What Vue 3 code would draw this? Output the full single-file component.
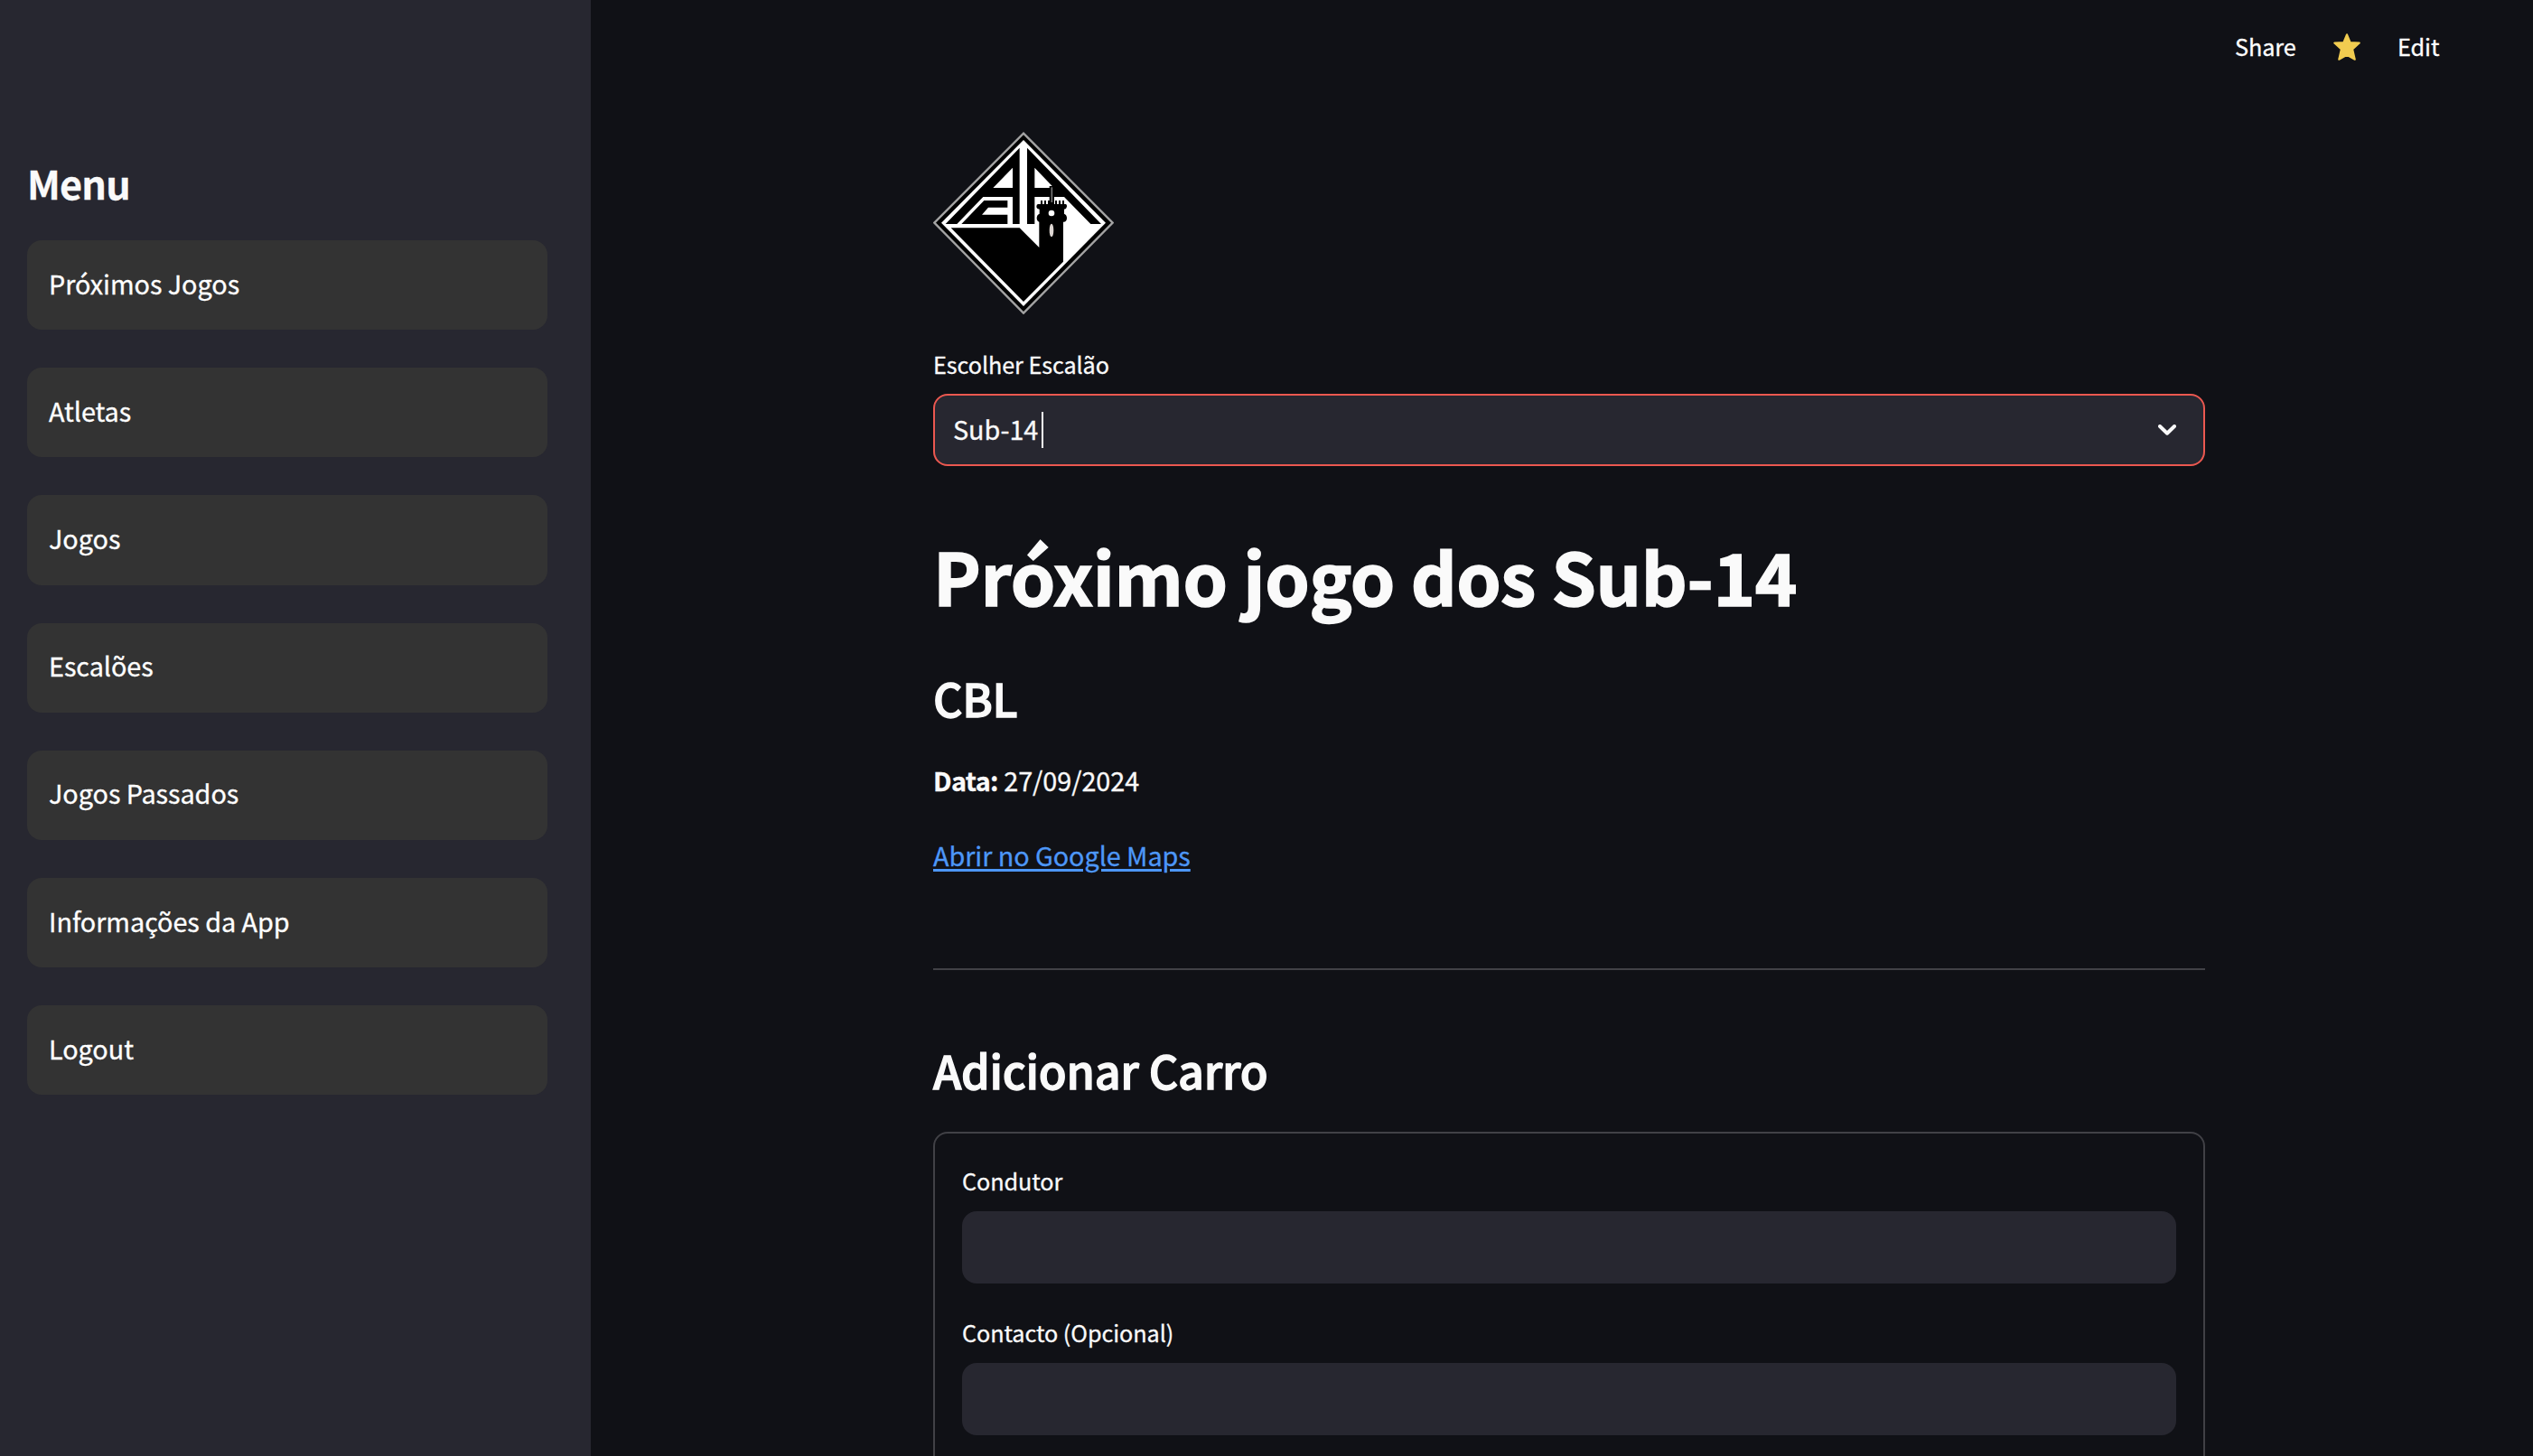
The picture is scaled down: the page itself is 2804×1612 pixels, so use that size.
<script setup>
const menu = ['Próximos Jogos', 'Atletas', 'Jogos', 'Escalões', 'Jogos Passados', 'Informações da App', 'Logout']
const fields = ['Condutor', 'Contacto (Opcional)']
</script>

<template>
  <div class="app">
    <aside class="sidebar">
      <h2 class="menu-title">Menu</h2>
      <nav class="menu">
        <a v-for="item in menu" :key="item" class="menu-item">{{ item }}</a>
      </nav>
    </aside>

    <div class="page">
      <header class="toolbar">
        <span class="share">Share</span>
        <svg class="star" viewBox="0 0 30 30">
          <path d="M15 1.2 18.6 10 28.8 10.6 21.2 17.4 23.8 28.8 15 23.8 6.2 28.8 8.8 17.4 1.2 10.6 11.4 10Z" />
        </svg>
        <span>Edit</span>
      </header>

      <main class="content">
        <svg class="logo" viewBox="39 48 600 606">
          <path d="M339 53 635 350 339 650 43 350Z" fill="#000" stroke="#a3a3a3" stroke-width="7" />
          <path d="M339 75 612 350 339 627 66 350Z" fill="#fff" />
          <path
            d="M326 101V354H303V264H205L118 354H80ZM303 167 238 234H303Z"
            fill="#000" fill-rule="evenodd"
          />
          <path d="M208 276H286V299H222L201 323H286V354H133Z" fill="#000" />
          <path
            d="M351 101 597 354H562L474 264H376V354H351ZM376 167 440 234H376Z"
            fill="#000" fill-rule="evenodd"
          />
          <path d="M98 367H326L391 432V345H471V479L339 612Z" fill="#000" />
          <path
            d="M387 288H479Q484 289 483 296 482 304 474 305V320Q483 324 483 334 483 346 474 347H392Q383 346 383 334 383 324 392 320V305Q382 303 382 296 382 289 387 288Z"
            fill="#000"
          />
          <path d="M396 282H474" stroke="#000" stroke-width="12" stroke-dasharray="6 6" />
          <path d="M425 228H441V288H425Z" fill="#000" />
          <path d="M433 232V282" stroke="#777" stroke-width="5" />
          <circle cx="432" cy="318" r="10" fill="#fff" />
          <ellipse cx="432" cy="375" rx="7" ry="22" fill="#ddd6d2" />
        </svg>

        <label class="label">Escolher Escalão</label>
        <div class="select">
          <span>Sub-14</span>
          <i class="caret"></i>
          <svg class="chevron" viewBox="0 0 20 12">
            <path d="M2 2 10 9.7 18 2" />
          </svg>
        </div>

        <h1 class="title">Próximo jogo dos Sub-14</h1>
        <h2 class="heading">CBL</h2>
        <p class="text date"><strong>Data:</strong> 27/09/2024</p>
        <p class="text link"><a>Abrir no Google Maps</a></p>
        <hr class="rule" />
        <h2 class="heading add">Adicionar Carro</h2>

        <form class="form">
          <div v-for="field in fields" :key="field" class="field">
            <label class="label">{{ field }}</label>
            <div class="input"></div>
          </div>
        </form>
      </main>
    </div>
  </div>
</template>

<style>
body {
  margin: 0;
  background: #0f1116;
}
</style>

<style scoped>
.app {
  display: flex;
  height: 1612px;
  overflow: hidden;
  box-sizing: border-box;
  background: #101116;
  color: #fafafa;
  font-family: "Noto Sans CJK SC", "Noto Sans", sans-serif;
  font-size: 28.8px;
  letter-spacing: -0.06px;
  -webkit-text-stroke: 0.3px currentColor;
}
h1,
h2,
p {
  margin: 0;
}
.sidebar {
  box-sizing: border-box;
  flex: none;
  width: 654px;
  padding: 173px 48px 0 30px;
  background: #272730;
}
.menu-title {
  font-size: 43.2px;
  line-height: 58px;
  letter-spacing: -0.8px;
  font-weight: 700;
}
.menu {
  display: flex;
  flex-direction: column;
  gap: 42px;
  margin-top: 35px;
}
.menu-item {
  padding: 21.6px 24px 26.4px;
  border-radius: 16px;
  background: #333;
  color: #fff;
  line-height: 51.2px;
}
.page {
  flex: 1;
}
.toolbar {
  display: flex;
  align-items: center;
  height: 102px;
  padding-left: 1820px;
  font-size: 25.2px;
  line-height: 40px;
  color: #fff;
}
.share {
  width: 109px;
}
.star {
  width: 30px;
  height: 30px;
  margin: 2px 41px 0 0;
  fill: #f1cc50;
  stroke: #f1cc50;
  stroke-width: 2;
  stroke-linejoin: round;
}
.content {
  width: 1408px;
  padding: 44px 0 0 379px;
}
.logo {
  display: block;
  width: 200px;
  height: 202px;
  margin-bottom: 35px;
}
.label {
  display: block;
  font-size: 25.2px;
  line-height: 40px;
}
.select {
  display: flex;
  align-items: center;
  box-sizing: border-box;
  height: 80px;
  margin-top: 13px;
  padding: 0 30px 0 20px;
  border: 2px solid #eb5850;
  border-radius: 16px;
  background: #272730;
  line-height: 40px;
}
.select span {
  margin-top: -3px;
}
.caret {
  width: 2px;
  height: 40px;
  margin-left: 4px;
  background: #fff;
}
.chevron {
  width: 20px;
  height: 12px;
  margin-left: auto;
  fill: none;
  stroke: #fafafa;
  stroke-width: 4;
  stroke-linecap: round;
  stroke-linejoin: round;
}
.title {
  margin-top: 68px;
  font-size: 79.2px;
  line-height: 106px;
  letter-spacing: -0.36px;
  font-weight: 700;
  -webkit-text-stroke: 1.5px currentColor;
}
.heading {
  margin-top: 49px;
  font-size: 50.4px;
  line-height: 68px;
  letter-spacing: -0.28px;
  font-weight: 500;
  -webkit-text-stroke: 1.3px currentColor;
}
.text {
  line-height: 51px;
}
.date {
  margin-top: 31px;
}
.date strong {
  font-weight: 700;
  letter-spacing: -0.6px;
}
.link {
  margin-top: 32px;
}
.link a {
  color: #4d97f8;
  text-decoration: underline;
  text-decoration-thickness: 3px;
  text-underline-offset: 3px;
}
.rule {
  height: 2px;
  margin: 100px 0 0;
  border: 0;
  background: #414146;
}
.add {
  margin-top: 77px;
}
.form {
  display: flex;
  flex-direction: column;
  gap: 34px;
  height: 500px;
  box-sizing: border-box;
  margin-top: 34px;
  padding: 32px 30px;
  border: 2px solid #414146;
  border-radius: 16px;
}
.input {
  height: 80px;
  margin-top: 14px;
  border-radius: 16px;
  background: #272730;
}
</style>
